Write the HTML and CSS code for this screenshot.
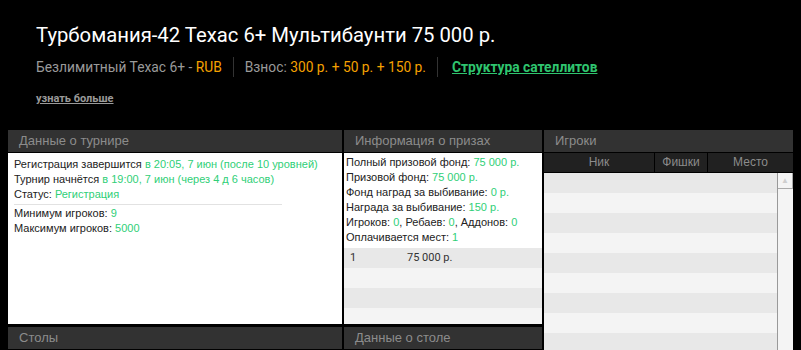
FILE: index.html
```html
<!DOCTYPE html>
<html lang="ru">
<head>
  <meta charset="UTF-8" />
  <meta name="viewport" content="width=device-width, initial-scale=1.0"/>
  <title>Турбомания-42 Техас 6+ Мультибаунти</title>
  <link rel="stylesheet" href="styles.css">
</head>
<body>
  <div class="tour-head">
    <h1 class="tour-title">Турбомания-42 Техас 6+ Мультибаунти 75 000 р.</h1>
    <div class="tour-meta">
      <span class="meta-item">Безлимитный Техас 6+ - <span class="orange">RUB</span></span>
      <span class="meta-item">Взнос: <span class="orange">300 р. + 50 р. + 150 р.</span></span>
      <span class="meta-item"><a class="sat-link" href="#">Структура сателлитов</a></span>
    </div>
    <a class="more-link" href="#">узнать больше</a>
  </div>

  <div class="panels">
    <div class="panel info-panel">
      <div class="panel-head">Данные о турнире</div>
      <div class="panel-body">
        <div>Регистрация завершится <span class="green">в 20:05, 7 июн (после 10 уровней)</span></div>
        <div>Турнир начнётся <span class="green">в 19:00, 7 июн (через 4 д 6 часов)</span></div>
        <div>Статус: <span class="green">Регистрация</span></div>
        <div class="sep"></div>
        <div>Минимум игроков: <span class="green">9</span></div>
        <div>Максимум игроков: <span class="green">5000</span></div>
      </div>
    </div>

    <div class="panel prize-panel">
      <div class="panel-head">Информация о призах</div>
      <div class="panel-body">
        <div class="prize-info">
          <div>Полный призовой фонд: <span class="green">75 000 р.</span></div>
          <div>Призовой фонд: <span class="green">75 000 р.</span></div>
          <div>Фонд наград за выбивание: <span class="green">0 р.</span></div>
          <div>Награда за выбивание: <span class="green">150 р.</span></div>
          <div>Игроков: <span class="green">0</span>, Ребаев: <span class="green">0</span>, Аддонов: <span class="green">0</span></div>
          <div>Оплачивается мест: <span class="green">1</span></div>
        </div>
        <div class="row"><span class="place">1</span><span>75 000 р.</span></div>
        <div class="row"></div>
        <div class="row"></div>
        <div class="row"></div>
      </div>
    </div>

    <div class="panel players-panel">
      <div class="panel-head">Игроки</div>
      <div class="cols">
        <span class="col-nick">Ник</span>
        <span class="col-chips">Фишки</span>
        <span class="col-place">Место</span>
      </div>
      <div class="players-body">
        <div class="players-rows">
          <div class="row"></div>
          <div class="row"></div>
          <div class="row"></div>
          <div class="row"></div>
          <div class="row"></div>
          <div class="row"></div>
          <div class="row"></div>
          <div class="row"></div>
          <div class="row"></div>
        </div>
        <div class="scrollbar">
          <div class="scroll-up">&#9650;</div>
        </div>
      </div>
    </div>

    <div class="panel tables-panel">
      <div class="panel-head">Столы</div>
      <div class="cols tables-cols">
        <span></span><span></span><span></span><span></span>
      </div>
    </div>

    <div class="panel table-panel">
      <div class="panel-head">Данные о столе</div>
      <div class="cols tables-cols">
        <span></span><span></span>
      </div>
    </div>
  </div>
</body>
</html>
```

FILE: styles.css
```css
html, body {
  overflow: hidden;
}

body {
  margin: 0;
  background-color: #000;
  font-family: "Liberation Sans", Arial, sans-serif;
}

.tour-head {
  padding: 22px 36px 0;
  font-family: Roboto, "Liberation Sans", sans-serif;
}

.tour-title {
  margin: 0;
  font-size: 20.3px;
  line-height: 26px;
  font-weight: 400;
  color: #fff;
}

.tour-meta {
  display: flex;
  align-items: center;
  margin-top: 9px;
  font-size: 13.8px;
  line-height: 20px;
  color: #9a9a9a;
}

.meta-item {
  padding: 0 11px;
  border-left: 1px solid #333;
}

.meta-item:first-child {
  padding-left: 0;
  border-left: none;
}

.meta-item:last-child {
  padding-left: 14px;
}

.orange {
  color: #f5a000;
}

.sat-link {
  color: #2fc56f;
  font-weight: 700;
}

.more-link {
  display: inline-block;
  margin-top: 15px;
  font-size: 11px;
  line-height: 14px;
  font-weight: 700;
  color: #9a9a9a;
}

.panels {
  display: grid;
  grid-template-columns: 334px 198px 1fr;
  grid-template-rows: 194px auto;
  column-gap: 2px;
  row-gap: 3px;
  margin-top: 24px;
  padding: 0 8px;
}

.panel {
  display: flex;
  flex-direction: column;
  overflow: hidden;
}

.panel-head {
  height: 22px;
  line-height: 22px;
  padding-left: 11px;
  background-color: #323232;
  border-bottom: 1px solid #000;
  color: #8c8c8c;
  font-size: 13px;
}

.panel-body {
  flex: 1;
  background-color: #fff;
  color: #222;
  font-size: 11px;
  line-height: 15px;
  overflow: hidden;
}

.green {
  color: #2fcf77;
}

.info-panel .panel-body {
  padding: 4px 6px 0;
}

.sep {
  width: 268px;
  height: 1px;
  margin: 2px 0 1px;
  background-color: #e2e2e2;
}

.prize-info {
  padding: 2px 2px 3px;
}

.row {
  height: 20px;
  line-height: 20px;
  background-color: #f4f4f4;
}

.row:nth-child(even) {
  background-color: #e8e8e8;
}

.prize-panel .row {
  display: flex;
  padding-left: 6px;
  font-family: Roboto, "Liberation Sans", sans-serif;
  font-size: 11px;
  color: #333;
}

.place {
  width: 57px;
}

.players-panel {
  grid-row: span 2;
}

.cols {
  display: flex;
  height: 19px;
  line-height: 19px;
  background-color: #212121;
  border-bottom: 1px solid #000;
  color: #8c8c8c;
  font-size: 12px;
}

.cols span {
  text-align: center;
  border-left: 1px solid #000;
}

.cols span:first-child {
  border-left: none;
}

.col-nick {
  width: 110px;
}

.col-chips {
  width: 52px;
}

.col-place {
  flex: 1;
}

.players-body {
  flex: 1;
  display: flex;
  background-color: #f4f4f4;
}

.players-rows {
  flex: 1;
}

.players-rows .row:nth-child(odd) {
  background-color: #e8e8e8;
}

.players-rows .row:nth-child(even) {
  background-color: #f4f4f4;
}

.scrollbar {
  width: 15px;
  border-left: 1px solid #999;
  background-color: #f4f4f4;
}

.scroll-up {
  height: 15px;
  border-bottom: 1px solid #aaa;
  border-right: 1px solid #aaa;
  color: #cfcfcf;
  font-size: 8px;
  line-height: 15px;
  text-align: center;
}

.tables-cols span {
  width: 119px;
}

.tables-cols span:nth-child(2) {
  width: 76px;
}

.tables-cols span:nth-child(3) {
  width: 62px;
}
```
